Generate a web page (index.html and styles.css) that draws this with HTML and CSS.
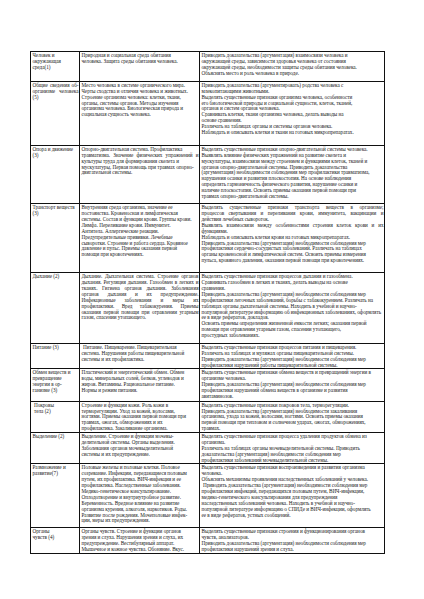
FILE: index.html
```html
<!DOCTYPE html>
<html lang="ru">
<head>
<meta charset="utf-8">
<title>Человек и его здоровье</title>
<link rel="stylesheet" href="styles.css">
</head>
<body>
<table class="plan">
<colgroup><col class="c1"><col class="c2"><col class="c3"></colgroup>
<tbody>
<tr class="r1">
<td><span class="l">Человек и</span><span class="l">окружающая</span><span class="l">среда(1)</span></td>
<td><span class="l">Природная и социальная среда обитания</span><span class="l">человека. Защита среды обитания человека.</span></td>
<td><span class="l">Приводить доказательства (аргументация) взаимосвязи человека и</span><span class="l">окружающей среды, зависимости здоровья человека от состояния</span><span class="l">окружающей среды, необходимости защиты среды обитания человека.</span><span class="l">Объяснять место и роль человека в природе.</span></td>
</tr>
<tr class="r2">
<td><span class="l j">Общие сведения об-</span><span class="l j">организме человека</span><span class="l">(5)</span></td>
<td><span class="l">Место человека в системе органического мира.</span><span class="l">Черты сходства и отличия человека и животных.</span><span class="l">Строение организма человека: клетки, ткани,</span><span class="l">органы, системы органов. Методы изучения</span><span class="l">организма человека. Биологическая природа и</span><span class="l">социальная сущность человека.</span></td>
<td><span class="l">Приводить доказательства (аргументировать) родства человека с</span><span class="l">млекопитающими животными.</span><span class="l">Выделять существенные признаки организма человека, особенности</span><span class="l">его биологической природы и социальной сущности, клеток, тканей,</span><span class="l">органов и систем органов человека.</span><span class="l">Сравнивать клетки, ткани организма человека, делать выводы на</span><span class="l">основе сравнения.</span><span class="l">Различать на таблицах органы и системы органов человека.</span><span class="l">Наблюдать и описывать клетки и ткани на готовых микропрепаратах.</span></td>
</tr>
<tr class="r3">
<td><span class="l">Опора и движение</span><span class="l">(3)</span></td>
<td><span class="l">Опорно-двигательная система. Профилактика</span><span class="l j">травматизма. Значение физических упражнений и</span><span class="l">культуры труда для формирования скелета и</span><span class="l">мускулатуры. Первая помощь при травмах опорно-</span><span class="l">двигательной системы.</span></td>
<td><span class="l">Выделять существенные признаки опорно-двигательной системы человека.</span><span class="l">Выявлять влияние физических упражнений на развитие скелета и</span><span class="l">мускулатуры, взаимосвязи между строением и функциями клеток, тканей и</span><span class="l">органов опорно-двигательной системы. Приводить доказательства</span><span class="l">(аргументация) необходимости соблюдения мер профилактики травматизма,</span><span class="l">нарушения осанки и развития плоскостопия. На основе наблюдения</span><span class="l">определять гармоничность физического развития, нарушение осанки и</span><span class="l">наличие плоскостопия. Освоить приемы оказания первой помощи при</span><span class="l">травмах опорно-двигательной системы.</span></td>
</tr>
<tr class="r4">
<td><span class="l">Транспорт веществ</span><span class="l">(3)</span></td>
<td><span class="l">Внутренняя среда организма, значение ее</span><span class="l">постоянства. Кровеносная и лимфатическая</span><span class="l">системы. Состав и функции крови. Группы крови.</span><span class="l">Лимфа. Переливание крови. Иммунитет.</span><span class="l">Антитела. Аллергические реакции.</span><span class="l">Предупредительные прививки. Лечебные</span><span class="l">сыворотки. Строение и работа сердца. Кровяное</span><span class="l">давление и пульс. Приемы оказания первой</span><span class="l">помощи при кровотечениях.</span></td>
<td><span class="l j">Выделять существенные признаки транспорта веществ в организме;</span><span class="l j">процессов свертывания и переливания крови, иммунитета, вакцинации и</span><span class="l">действия лечебных сывороток.</span><span class="l j">Выявлять взаимосвязи между особенностями строения клеток крови и их</span><span class="l">функциями.</span><span class="l">Наблюдать и описывать клетки крови на готовых микропрепаратах.</span><span class="l">Приводить доказательства (аргументация) необходимости соблюдения мер</span><span class="l">профилактики сердечно-сосудистых заболеваний. Различать на таблицах</span><span class="l">органы кровеносной и лимфатической систем. Освоить приемы измерения</span><span class="l">пульса, кровяного давления, оказания первой помощи при кровотечениях.</span></td>
</tr>
<tr class="r5">
<td><span class="l">Дыхание (2)</span></td>
<td><span class="l j">Дыхание. Дыхательная система. Строение органов</span><span class="l j">дыхания. Регуляция дыхания. Газообмен в легких и</span><span class="l j">тканях. Гигиена органов дыхания. Заболевания</span><span class="l j">органов дыхания и их предупреждение.</span><span class="l j">Инфекционные заболевания и меры их</span><span class="l j">профилактики. Вред табакокурения. Приемы</span><span class="l j">оказания первой помощи при отравлении угарным</span><span class="l">газом, спасении утопающего.</span></td>
<td><span class="l">Выделять существенные признаки процессов дыхания и газообмена.</span><span class="l">Сравнивать газообмен в легких и тканях, делать выводы на основе</span><span class="l">сравнения.</span><span class="l">Приводить доказательства (аргументация) необходимости соблюдения мер</span><span class="l">профилактики легочных заболеваний, борьбы с табакокурением. Различать на</span><span class="l">таблицах органы дыхательной системы. Находить в учебной и научно-</span><span class="l">популярной литературе информацию об инфекционных заболеваниях, оформлять</span><span class="l">ее в виде рефератов, докладов.</span><span class="l">Освоить приемы определения жизненной емкости легких; оказания первой</span><span class="l">помощи при отравлении угарным газом, спасении утопающего,</span><span class="l">простудных заболеваниях.</span></td>
</tr>
<tr class="r6">
<td><span class="l">Питание (3)</span></td>
<td><span class="l ind">Питание. Пищеварение. Пищеварительная</span><span class="l">система. Нарушения работы пищеварительной</span><span class="l">системы и их профилактика.</span></td>
<td><span class="l">Выделять существенные признаки процессов питания и пищеварения.</span><span class="l">Различать на таблицах и муляжах органы пищеварительной системы.</span><span class="l">Приводить доказательства (аргументация) необходимости соблюдения мер</span><span class="l">профилактики нарушений работы пищеварительной системы.</span></td>
</tr>
<tr class="r7">
<td><span class="l">Обмен веществ и</span><span class="l">превращение</span><span class="l">энергии в ор-</span><span class="l">ганизме (3)</span></td>
<td><span class="l">Пластический и энергетический обмен. Обмен</span><span class="l">воды, минеральных солей, белков, углеводов и</span><span class="l">жиров. Витамины. Рациональное питание.</span><span class="l">Нормы и режим питания.</span></td>
<td><span class="l">Выделять существенные признаки обмена веществ и превращений энергии в</span><span class="l">организме человека.</span><span class="l">Приводить доказательства (аргументация) необходимости соблюдения мер</span><span class="l">профилактики нарушений обмена веществ в организме и развития</span><span class="l">авитаминозов.</span></td>
</tr>
<tr class="r8">
<td><span class="l ind">Покровы</span><span class="l ind">тела (2)</span></td>
<td><span class="l">Строение и функции кожи. Роль кожи в</span><span class="l">терморегуляции. Уход за кожей, волосами,</span><span class="l">ногтями. Приемы оказания первой помощи при</span><span class="l">травмах, ожогах, обморожениях и их</span><span class="l">профилактика. Закаливание организма.</span></td>
<td><span class="l">Выделять существенные признаки покровов тела, терморегуляции.</span><span class="l">Приводить доказательства (аргументация) необходимости закаливания</span><span class="l">организма, ухода за кожей, волосами, ногтями. Освоить приемы оказания</span><span class="l">первой помощи при тепловом и солнечном ударах, ожогах, обморожениях,</span><span class="l">травмах.</span></td>
</tr>
<tr class="r9">
<td><span class="l">Выделение (2)</span></td>
<td><span class="l">Выделение. Строение и функции мочевы-</span><span class="l">делительной системы. Органы выделения.</span><span class="l">Заболевания органов мочевыделительной</span><span class="l">системы и их предупреждение.</span></td>
<td><span class="l">Выделять существенные признаки процесса удаления продуктов обмена из</span><span class="l">организма.</span><span class="l">Различать на таблицах органы мочевыделительной системы. Приводить</span><span class="l">доказательства (аргументация) необходимости соблюдения мер</span><span class="l">профилактики заболеваний мочевыделительной системы.</span></td>
</tr>
<tr class="r10">
<td><span class="l">Размножение и</span><span class="l">развитие(7)</span></td>
<td><span class="l">Половые железы и половые клетки. Половое</span><span class="l">созревание. Инфекции, передающиеся половым</span><span class="l">путем, их профилактика. ВИЧ-инфекция и ее</span><span class="l">профилактика. Наследственные заболевания.</span><span class="l">Медико-генетическое консультирование.</span><span class="l">Оплодотворение и внутриутробное развитие.</span><span class="l">Беременность. Вредное влияние на развитие</span><span class="l">организма курения, алкоголя, наркотиков. Роды.</span><span class="l">Развитие после рождения. Мочеполовые инфек-</span><span class="l">ции, меры их предупреждения.</span></td>
<td><span class="l">Выделять существенные признаки воспроизведения и развития организма</span><span class="l">человека.</span><span class="l">Объяснять механизмы проявления наследственных заболеваний у человека.</span><span class="l ind">Приводить доказательства (аргументация) необходимости соблюдения мер</span><span class="l">профилактики инфекций, передающихся половым путем, ВИЧ-инфекции,</span><span class="l">медико-генетического консультирования для предупреждения</span><span class="l">наследственных заболеваний человека. Находить в учебной и научно-</span><span class="l">популярной литературе информацию о СПИДе и ВИЧ-инфекции, оформлять</span><span class="l">ее в виде рефератов, устных сообщений.</span></td>
</tr>
<tr class="r11">
<td><span class="l">Органы</span><span class="l">чувств (4)</span></td>
<td><span class="l">Органы чувств. Строение и функции органов</span><span class="l">зрения и слуха. Нарушения зрения и слуха, их</span><span class="l">предупреждение. Вестибулярный аппарат.</span><span class="l">Мышечное и кожное чувства. Обоняние. Вкус.</span></td>
<td><span class="l">Выделять существенные признаки строения и функционирования органов</span><span class="l">чувств, анализаторов.</span><span class="l">Приводить доказательства (аргументация) необходимости соблюдения мер</span><span class="l">профилактики нарушений зрения и слуха.</span></td>
</tr>
</tbody>
</table>
</body>
</html>
```
FILE: styles.css
```css
html, body {
  margin: 0;
  padding: 0;
  background: #ffffff;
}
body {
  font-family: "Liberation Serif", "Times New Roman", serif;
  color: #1a1a1a;
}
.plan {
  margin: 51px 0 0 30px;
  width: 354px;
  table-layout: fixed;
  border-collapse: collapse;
  font-size: 5.2px;
  line-height: 5.9px;
  letter-spacing: -0.02px;
}
.c1 { width: 49px; }
.c2 { width: 120px; }
.c3 { width: 185px; }
.plan td {
  border: 1px solid #111;
  vertical-align: top;
  padding: 0.8px 0.5px 0 1.5px;
  overflow: hidden;
}
.l {
  display: block;
  white-space: nowrap;
}
.l.j {
  text-align: justify;
  text-align-last: justify;
}
.l.ind { padding-left: 1.5px; }
.r1 { height: 30px; }
.r2 { height: 64px; }
.r3 { height: 58.3px; }
.r4 { height: 69px; }
.r5 { height: 70.7px; }
.r6 { height: 23.6px; }
.r7 { height: 32.4px; }
.r8 { height: 31px; }
.r9 { height: 30.6px; }
.r10 { height: 63.7px; }
.r11 { height: 26px; }
```
